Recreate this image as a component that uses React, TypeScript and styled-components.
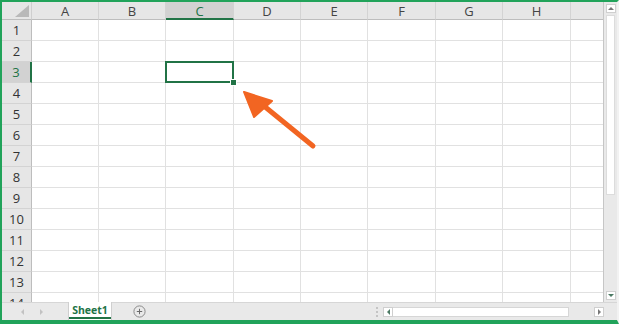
import React from 'react';
import styled, { createGlobalStyle } from 'styled-components';

const GlobalStyle = createGlobalStyle`
  html, body {
    margin: 0;
    padding: 0;
    background: #ffffff;
  }
  body {
    font-family: "Segoe UI", "Open Sans", "Noto Sans", sans-serif;
  }
`;

const Frame = styled.div`
  position: relative;
  width: 619px;
  height: 324px;
  box-sizing: border-box;
  border-top: 2px solid #21a35a;
  border-left: 2px solid #21a35a;
  border-bottom: 4px solid #21a35a;
  border-right: 2px solid #f2f2f2;
  display: flex;
  flex-direction: column;
  overflow: hidden;
  background: #fff;
`;

const Main = styled.div`
  display: flex;
  height: 300px;
`;

const Sheet = styled.div`
  width: 602px;
  height: 300px;
  overflow: hidden;
  display: grid;
  grid-template-columns: 30px 67px 67px 68px 67px 67px 68px 67px 68px 33px;
  grid-template-rows: 18px repeat(14, 21px);
  border-right: 1px solid #c6c6c6;
  box-sizing: border-box;
`;

const Corner = styled.div`
  position: relative;
  background: #e6e6e6;
  border-right: 1px solid #cfcfcf;
  border-bottom: 1px solid #bdbdbd;
  box-sizing: border-box;
`;

const CornerTriangle = styled.div`
  position: absolute;
  right: 2px;
  bottom: 2px;
  width: 0;
  height: 0;
  border-left: 14px solid transparent;
  border-bottom: 12px solid #b9b9b9;
`;

const ColHead = styled.div<{ $active?: boolean }>`
  display: flex;
  align-items: center;
  justify-content: center;
  font-size: 13px;
  color: ${(p) => (p.$active ? '#217346' : '#444')};
  background: ${(p) => (p.$active ? '#d2d2d2' : '#e6e6e6')};
  border-right: 1px solid #d3d3d3;
  border-bottom: ${(p) => (p.$active ? '2px solid #217346' : '1px solid #bdbdbd')};
  box-sizing: border-box;
  padding-top: ${(p) => (p.$active ? '1px' : '0')};
`;

const RowHead = styled.div<{ $active?: boolean }>`
  display: flex;
  align-items: center;
  justify-content: center;
  font-size: 13px;
  color: ${(p) => (p.$active ? '#217346' : '#333')};
  background: ${(p) => (p.$active ? '#d2d2d2' : '#e6e6e6')};
  border-right: ${(p) => (p.$active ? '2px solid #217346' : '1px solid #bdbdbd')};
  border-bottom: 1px solid #d3d3d3;
  box-sizing: border-box;
`;

const Cell = styled.div<{ $selected?: boolean }>`
  position: relative;
  border-right: 1px solid #e1e1e1;
  border-bottom: 1px solid #e1e1e1;
  box-sizing: border-box;
  background: #fff;

  ${(p) =>
    p.$selected &&
    `
    &::after {
      content: '';
      position: absolute;
      left: -1px;
      top: -1px;
      right: -1px;
      bottom: -1px;
      border: 2px solid #217346;
      z-index: 2;
    }
    &::before {
      content: '';
      position: absolute;
      right: -4px;
      bottom: -4px;
      width: 5px;
      height: 5px;
      background: #217346;
      border: 1px solid #fff;
      box-sizing: content-box;
      z-index: 3;
    }
  `}
`;

const VScroll = styled.div`
  width: 13px;
  height: 300px;
  background: #e9e9e9;
  display: flex;
  flex-direction: column;
  align-items: center;
  padding: 2px 0;
  box-sizing: border-box;
`;

const ScrollButton = styled.div`
  width: 10px;
  height: 9px;
  background: #fff;
  border: 1px solid #cfcfcf;
  box-sizing: border-box;
  display: flex;
  align-items: center;
  justify-content: center;
  flex-shrink: 0;
`;

const ArrowUp = styled.div`
  width: 0;
  height: 0;
  border-left: 3px solid transparent;
  border-right: 3px solid transparent;
  border-bottom: 3px solid #777;
`;

const ArrowDown = styled.div`
  width: 0;
  height: 0;
  border-left: 3px solid transparent;
  border-right: 3px solid transparent;
  border-top: 3px solid #4c7a64;
`;

const ArrowLeft = styled.div<{ $color?: string }>`
  width: 0;
  height: 0;
  border-top: 3px solid transparent;
  border-bottom: 3px solid transparent;
  border-right: 3px solid ${(p) => p.$color || '#4c7a64'};
`;

const ArrowRight = styled.div<{ $color?: string }>`
  width: 0;
  height: 0;
  border-top: 3px solid transparent;
  border-bottom: 3px solid transparent;
  border-left: 3px solid ${(p) => p.$color || '#777'};
`;

const VThumb = styled.div`
  width: 9px;
  height: 180px;
  margin-top: 2px;
  background: #fff;
  border: 1px solid #dcdcdc;
  box-sizing: border-box;
`;

const VTrack = styled.div`
  flex: 1;
`;

const BottomBar = styled.div`
  height: 18px;
  background: #e9e9e9;
  border-top: 1px solid #d6d6d6;
  box-sizing: border-box;
  display: flex;
  align-items: stretch;
`;

const Nav = styled.div`
  width: 66px;
  display: flex;
  align-items: center;
  gap: 16px;
  padding-left: 19px;
  box-sizing: border-box;
`;

const Tab = styled.div`
  width: 44px;
  background: #fff;
  border-left: 1px solid #cfcfcf;
  border-right: 1px solid #cfcfcf;
  box-sizing: border-box;
  display: flex;
  align-items: flex-end;
  justify-content: center;
  margin-top: -1px;
`;

const TabLabel = styled.span`
  font-family: "Segoe UI", "Open Sans", "Noto Sans", sans-serif;
  font-size: 10.5px;
  font-weight: 700;
  color: #217346;
  line-height: 14px;
  padding: 0 3px;
  border-bottom: 2px solid #217346;
  margin-bottom: 1px;
`;

const AddSheet = styled.div`
  width: 54px;
  display: flex;
  align-items: center;
  justify-content: center;
`;

const Spacer = styled.div`
  flex: 1;
`;

const Grip = styled.div`
  width: 12px;
  display: flex;
  flex-direction: column;
  align-items: center;
  justify-content: center;
  gap: 2px;
`;

const GripDot = styled.div`
  width: 2px;
  height: 2px;
  background: #c4c4c4;
`;

const HScroll = styled.div`
  width: 221px;
  display: flex;
  align-items: center;
  margin-right: 13px;
`;

const HButton = styled.div`
  width: 10px;
  height: 10px;
  background: #fff;
  border: 1px solid #cfcfcf;
  box-sizing: border-box;
  display: flex;
  align-items: center;
  justify-content: center;
  flex-shrink: 0;
`;

const HThumb = styled.div`
  width: 176px;
  height: 10px;
  background: #fff;
  border: 1px solid #d6d6d6;
  border-left: none;
  box-sizing: border-box;
`;

const HTrack = styled.div`
  flex: 1;
`;

const Annotation = styled.svg`
  position: absolute;
  left: 0;
  top: 0;
  pointer-events: none;
`;

const COLS = ['A', 'B', 'C', 'D', 'E', 'F', 'G', 'H', ''];
const ROWS = Array.from({ length: 14 }, (_, i) => i + 1);

function App() {
  return (
    <>
      <GlobalStyle />
      <Frame>
        <Main>
          <Sheet>
            <Corner>
              <CornerTriangle />
            </Corner>
            {COLS.map((c, i) => (
              <ColHead key={'h' + i} $active={c === 'C'}>
                {c}
              </ColHead>
            ))}
            {ROWS.map((r) => (
              <React.Fragment key={r}>
                <RowHead $active={r === 3}>{r}</RowHead>
                {COLS.map((c, i) => (
                  <Cell key={r + '-' + i} $selected={r === 3 && c === 'C'} />
                ))}
              </React.Fragment>
            ))}
          </Sheet>
          <VScroll>
            <ScrollButton>
              <ArrowUp />
            </ScrollButton>
            <VThumb />
            <VTrack />
            <ScrollButton>
              <ArrowDown />
            </ScrollButton>
          </VScroll>
        </Main>
        <BottomBar>
          <Nav>
            <ArrowLeft $color="#c2c2c2" />
            <ArrowRight $color="#c2c2c2" />
          </Nav>
          <Tab>
            <TabLabel>Sheet1</TabLabel>
          </Tab>
          <AddSheet>
            <svg width="13" height="13" viewBox="0 0 13 13">
              <circle cx="6.5" cy="6.5" r="5.6" fill="none" stroke="#8a8a8a" strokeWidth="1" />
              <path d="M6.5 3.8v5.4M3.8 6.5h5.4" stroke="#6a6a6a" strokeWidth="1" />
            </svg>
          </AddSheet>
          <Spacer />
          <Grip>
            <GripDot />
            <GripDot />
            <GripDot />
          </Grip>
          <HScroll>
            <HButton>
              <ArrowLeft />
            </HButton>
            <HThumb />
            <HTrack />
            <HButton>
              <ArrowRight />
            </HButton>
          </HScroll>
        </BottomBar>
        <Annotation width="619" height="324" viewBox="0 0 619 324">
          <path d="M311 144 L262 104" stroke="#f26522" strokeWidth="5" strokeLinecap="round" />
          <path d="M242 90 L270 99 L252 115 Z" fill="#f26522" stroke="#f26522" strokeWidth="2" strokeLinejoin="round" />
        </Annotation>
      </Frame>
    </>
  );
}

export default App;
